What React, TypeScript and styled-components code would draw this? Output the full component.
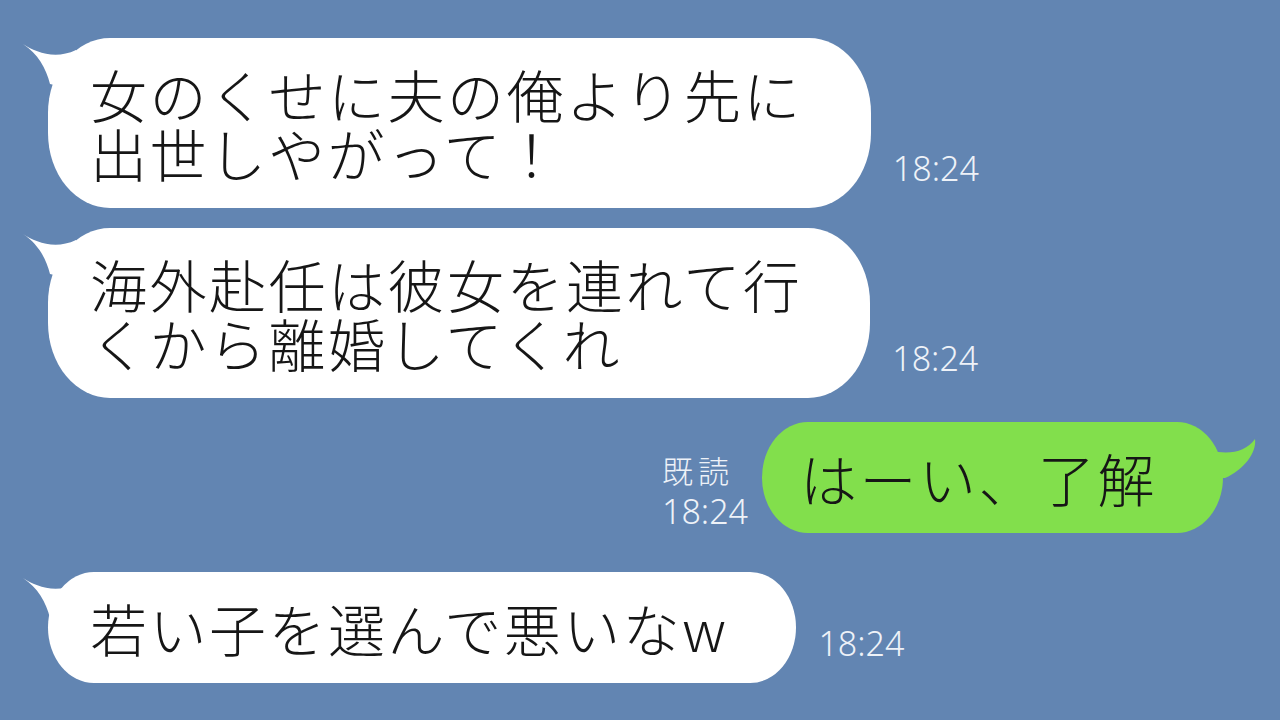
import React from "react";
import styled, { createGlobalStyle } from "styled-components";

const GlobalStyle = createGlobalStyle`
  html, body {
    margin: 0;
    padding: 0;
    background: #6285b2;
  }
`;

const Screen = styled.div`
  width: 1280px;
  height: 720px;
  overflow: hidden;
  background: #6285b2;
  display: flex;
  flex-direction: column;
  padding-top: 38px;
  box-sizing: border-box;
  font-family: "Noto Sans CJK JP", "Noto Sans", sans-serif;
`;

const Row = styled.div<{ $mine?: boolean; $gap: number }>`
  display: flex;
  align-items: flex-end;
  justify-content: flex-start;
  flex-direction: ${({ $mine }) => ($mine ? "row-reverse" : "row")};
  margin-top: ${({ $gap }) => $gap}px;
  padding: ${({ $mine }) => ($mine ? "0 57px 0 0" : "0 0 0 48px")};
  gap: ${({ $mine }) => ($mine ? 14 : 22)}px;
`;

const Bubble = styled.div<{ $mine?: boolean }>`
  position: relative;
  background: ${({ $mine }) => ($mine ? "#82df4c" : "#ffffff")};
  color: #161616;
  font-size: 57px;
  font-weight: 300;
  letter-spacing: 2.5px;
  line-height: 59px;
  white-space: pre-line;
  padding: ${({ $mine }) => ($mine ? "26px 66px 26px 38px" : "26px 68px 26px 42px")};
  border-radius: 62px / 75px;
`;

const TailSvg = styled.svg<{ $mine?: boolean }>`
  position: absolute;
  top: 0;
  ${({ $mine }) => ($mine ? "right: -36px;" : "left: -28px;")}
  width: 60px;
  height: 80px;
  overflow: visible;
`;

const Meta = styled.div<{ $mine?: boolean }>`
  display: flex;
  flex-direction: column;
  align-items: flex-start;
  margin-bottom: ${({ $mine }) => ($mine ? 6 : 24)}px;
  font-family: "Noto Sans", "Noto Sans CJK JP", sans-serif;
  font-weight: 300;
  font-size: 34px;
  line-height: 32px;
  color: #eef2f8;
`;

const ReadMark = styled.span`
  display: block;
  margin-bottom: 7px;
  font-family: "Noto Sans CJK JP", sans-serif;
  font-size: 31px;
  line-height: 36px;
  letter-spacing: 5px;
`;

const Tail: React.FC<{ mine?: boolean }> = ({ mine }) =>
  mine ? (
    <TailSvg $mine viewBox="0 0 60 80">
      <path
        d="M8 28 L19 30 C35 32 48 28 56 17 C58 30 45 48 26 56 L8 56 Z"
        fill="#82df4c"
      />
    </TailSvg>
  ) : (
    <TailSvg viewBox="0 0 60 80">
      <path
        d="M3 6 C15 14 35 22 56 12 L56 52 L30 46 C26 30 18 16 3 6 Z"
        fill="#ffffff"
      />
    </TailSvg>
  );

type Msg = { text: string; mine?: boolean; gap: number };

const messages: Msg[] = [
  { text: "女のくせに夫の俺より先に\n出世しやがって！", gap: 0 },
  { text: "海外赴任は彼女を連れて行\nくから離婚してくれ", gap: 20 },
  { text: "はーい、了解", mine: true, gap: 24 },
  { text: "若い子を選んで悪いなw", gap: 39 },
];

const App: React.FC = () => (
  <>
    <GlobalStyle />
    <Screen>
      {messages.map((m, i) => (
        <Row key={i} $mine={m.mine} $gap={m.gap}>
          <Bubble $mine={m.mine}>
            <Tail mine={m.mine} />
            {m.text}
          </Bubble>
          <Meta $mine={m.mine}>
            {m.mine && <ReadMark>既読</ReadMark>}
            <span>18:24</span>
          </Meta>
        </Row>
      ))}
    </Screen>
  </>
);

export default App;
